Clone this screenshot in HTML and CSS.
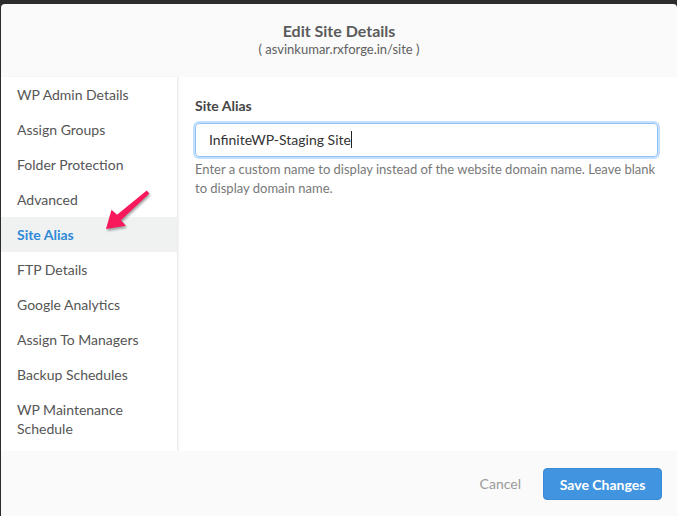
FILE: index.html
```html
<!DOCTYPE html>
<html>
	<head>
		<meta charset="UTF-8">
		<title>Edit Site Details</title>
		<link rel="stylesheet" href="styles.css">
	</head>
	<body>
		<div class="modal">
			<div class="modal-header">
				<h3 class="title">Edit Site Details</h3>
				<div class="subtitle">( asvinkumar.rxforge.in/site )</div>
			</div>
			<div class="modal-body">
				<!--left menu-->
				<ul class="side-menu">
					<li><a href="#">WP Admin Details</a></li>
					<li><a href="#">Assign Groups</a></li>
					<li><a href="#">Folder Protection</a></li>
					<li><a href="#">Advanced</a></li>
					<li class="current"><a href="#">Site Alias</a></li>
					<li><a href="#">FTP Details</a></li>
					<li><a href="#">Google Analytics</a></li>
					<li><a href="#">Assign To Managers</a></li>
					<li><a href="#">Backup Schedules</a></li>
					<li><a href="#">WP Maintenance Schedule</a></li>
				</ul>
				<!--form-->
				<div class="content">
					<label class="field-label">Site Alias</label>
					<div class="field-input">InfiniteWP-Staging Site<span class="caret"></span></div>
					<p class="help">Enter a custom name to display instead of the website domain name. Leave blank to display domain name.</p>
				</div>
			</div>
			<div class="modal-footer">
				<a href="#" class="btn-cancel">Cancel</a>
				<a href="#" class="btn-save">Save Changes</a>
			</div>
		</div>
		<!--annotation arrow-->
		<svg class="arrow" width="677" height="516" viewBox="0 0 677 516">
			<polygon points="146.7,190.5 117,214.8 111.5,209.8 106,229 126,225.8 120.9,220.3 149.4,193.5" fill="#f7195c"/>
		</svg>
	</body>
</html>
```

FILE: styles.css
```css
*{
	padding: 0;
	margin: 0;
	box-sizing: border-box;
}
html,body{
	height: 100%;
}
body{
	background-color: #2c2c2c;
	font-family: Lato, "Open Sans", sans-serif;
	overflow: hidden;
	position: relative;
}
a{
	text-decoration: none;
}
ul{
	list-style: none;
}

.modal{
	margin: 4px 0 0 1px;
	width: 676px;
	background-color: #fafafa;
	border-radius: 4px 4px 0 0;
	height: 512px;
	display: flex;
	flex-direction: column;
}

.modal-header{
	height: 73px;
	padding-top: 17px;
	text-align: center;
	color: #5b5b5b;
}
.modal-header .title{
	font-size: 16px;
	font-weight: 700;
	line-height: 20px;
}
.modal-header .subtitle{
	font-size: 13px;
	line-height: 16px;
	color: #606060;
}

.modal-body{
	display: flex;
	height: 374px;
	background-color: #fff;
}

.side-menu{
	width: 177px;
	background-color: #fff;
	border-right: 1px solid #ececec;
	box-shadow: 1px 0 2px rgba(0,0,0,0.05);
}
.side-menu li a{
	display: block;
	padding: 8px 16px;
	line-height: 19px;
	font-size: 14px;
	color: #555;
}
.side-menu li.current{
	background-color: #f0f1f1;
}
.side-menu li.current a{
	color: #2e8ad8;
	font-weight: 700;
}

.content{
	flex: 1;
	padding: 20px 19px 0 17px;
}
.field-label{
	display: block;
	font-size: 14px;
	font-weight: 700;
	line-height: 18px;
	color: #454545;
	margin-bottom: 8px;
}
.field-input{
	height: 34px;
	border: 1px solid #8dc0f5;
	border-radius: 4px;
	box-shadow: 0 0 0 2px #c6e0fb;
	padding: 0 13px;
	font-size: 14px;
	line-height: 32px;
	color: #333;
}
.caret{
	display: inline-block;
	width: 1px;
	height: 17px;
	background-color: #222;
	vertical-align: -3px;
}
.help{
	margin-top: 3px;
	font-size: 13px;
	line-height: 19px;
	color: #787878;
}

.modal-footer{
	flex: 1;
	display: flex;
	justify-content: flex-end;
	align-items: flex-start;
	padding: 17px 15px 0 0;
	background-color: #fafafa;
}
.btn-cancel{
	font-size: 14px;
	line-height: 32px;
	color: #9a9a9a;
	margin-right: 22px;
}
.btn-save{
	display: block;
	width: 119px;
	height: 32px;
	line-height: 32px;
	text-align: center;
	background-color: #4195e0;
	border: 1px solid #3a8bd6;
	border-radius: 4px;
	color: #fff;
	font-size: 14px;
	font-weight: 700;
}

.arrow{
	position: absolute;
	left: 0;
	top: 0;
	filter: drop-shadow(1px 2px 1px rgba(0,0,0,0.35));
	pointer-events: none;
}
```
